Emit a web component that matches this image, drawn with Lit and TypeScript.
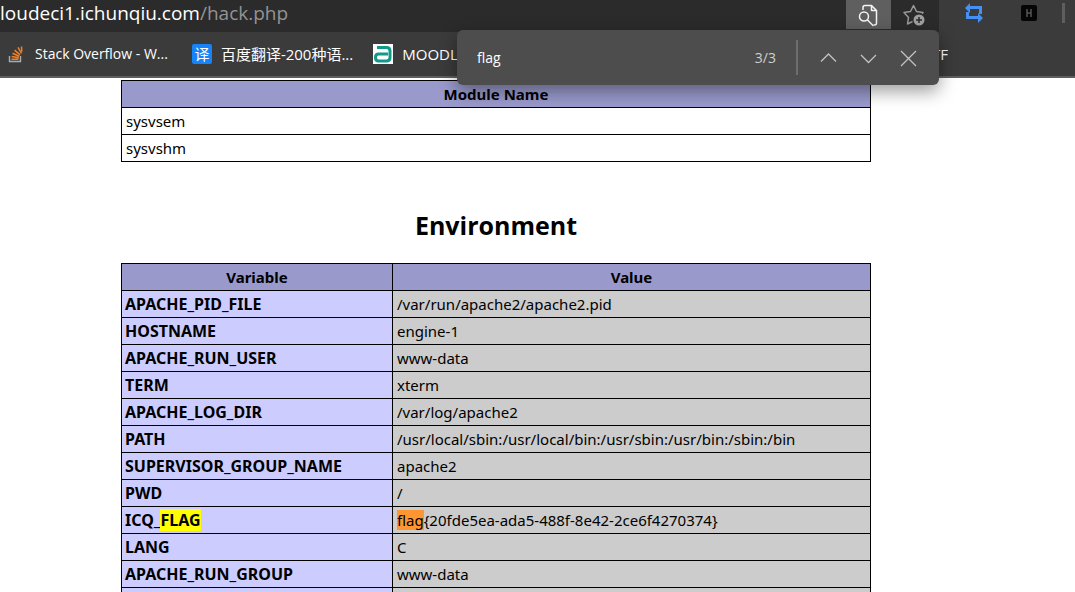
import { LitElement, html, css, svg, nothing } from "lit";
import { customElement } from "lit/decorators.js";

const fontStack = css`"Open Sans", "Noto Sans CJK SC", sans-serif`;

@customElement("browser-toolbar")
class BrowserToolbar extends LitElement {
  static styles = css`
    :host { display: block; color: #fff; font-family: ${fontStack}; }
    .top { display: flex; height: 32px; background: #3b3b3b; }
    .address { flex: 1; display: flex; background: #2b2b2b; min-width: 0; }
    .url { flex: 1; font-size: 19px; line-height: 26px; white-space: nowrap; overflow: hidden; }
    .path { color: #949494; }
    button { border: 0; padding: 0; margin: 0; background: none; display: block; }
    svg { display: block; }
    .find { width: 45px; height: 29px; padding: 0 10px; background: #5f5f5f; }
    .star { width: 48px; height: 29px; padding: 0 12px; }
    .extensions { width: 136px; display: flex; align-items: flex-start; padding-top: 3px; box-sizing: border-box; }
    .sync { margin-left: 25px; }
    .hack { margin-left: 37px; }
    .divider { width: 3px; height: 20px; margin-left: 25px; background: #5e5e5e; }
    .bookmarks {
      display: flex; align-items: center; height: 44px; padding-left: 6px;
      background: #3b3b3b; border-bottom: 2px solid #5e5e5e; overflow: hidden;
    }
    .bookmark {
      display: flex; align-items: center; gap: 9px; flex: none; margin-right: 20px;
      color: #fff; font-size: 15px; line-height: 20px; text-decoration: none; white-space: nowrap;
    }
    .latin { font-size: 14px; margin-right: 24px; }
    .spacer { flex: 1; }
    .last { margin-right: 127px; }
  `;
  render() {
    return html`
      <div class="top">
        <div class="address">
          <div class="url">loudeci1.ichunqiu.com<span class="path">/hack.php</span></div>
          <button class="find" aria-label="Find on page">
            <svg width="25" height="26" viewBox="0 0 25 26" fill="none" stroke="#f4f4f4" stroke-width="1.5" stroke-linejoin="round">
              <path d="M7 8V5.500q0-2 2-2h6.500l5 5v12.500q0 2-2 2h-1M15.500 3.500v5h5" />
              <circle cx="8" cy="14.500" r="4.500" /><path d="M11.500 18l5.500 5.500" stroke-linecap="round" />
            </svg>
          </button>
          <button class="star" aria-label="Add to favourites">
            <svg width="26" height="26" viewBox="0 0 26 26">
              <path d="M9.500 19.500l-5 2.500 1-6.500-4.500-5 6.500-1 3-6 3 6 6.500 1-1 1.200" fill="none" stroke="#989898" stroke-width="1.500" stroke-linejoin="round" />
              <circle cx="16" cy="18" r="5.500" fill="#a0a0a0" />
              <path d="M16 15v6M13 18h6" stroke="#2b2b2b" stroke-width="1.500" />
            </svg>
          </button>
        </div>
        <div class="extensions">
          <button class="sync" aria-label="Sync">
            <svg width="20" height="20" viewBox="0 0 20 20" fill="#4590f5">
              <path d="M6 0v3h12v8h-3V6H6v4L1 5zM14 20v-4H2V9h3v4h9V10l5 5z" />
            </svg>
          </button>
          <button class="hack" aria-label="HackBar">
            <svg width="16" height="20" viewBox="0 0 16 20">
              <rect y="2" width="16" height="16" rx="2" fill="#050505" />
              <path d="M6 6v8M10 6v8M6 10h4" stroke="#555" stroke-width="1.500" />
            </svg>
          </button>
          <span class="divider"></span>
        </div>
      </div>
      <nav class="bookmarks">
        <a class="bookmark latin" href="#">
          <svg width="20" height="20" viewBox="0 0 20 20" fill="none">
            <path d="M3.500 12v5.500h11V12" stroke="#a9adb0" stroke-width="1.400" />
            <path d="M5.500 15.200h7M5.700 12.500l7 1.200M6.600 9.300l6.500 3M8.600 6.200l5.500 4.600M12 3.300l3.500 6M15.500 2.500l.3 5" stroke="#f48024" stroke-width="1.500" />
          </svg>
          Stack Overflow - W...
        </a>
        <a class="bookmark" href="#">
          <svg width="20" height="20" viewBox="0 0 20 20">
            <rect width="20" height="20" rx="2" fill="#1684f8" />
            <text x="10" y="15.500" text-anchor="middle" font-size="15" fill="#fff" font-family="Noto Sans CJK SC">译</text>
          </svg>
          百度翻译-200种语...
        </a>
        <a class="bookmark" href="#">
          <svg width="20" height="20" viewBox="0 0 20 20">
            <rect width="20" height="20" fill="#fff" />
            <path d="M4 3.500h9.500q3.500 0 3.500 3.500v6.500q0 3.500-3.500 3.500H5.500q-3 0-3-3.500T5.500 10H15" fill="none" stroke="#11998a" stroke-width="3" />
            <path d="M6.500 13.500h6" stroke="#fff" stroke-width="1" />
          </svg>
          MOODLE
        </a>
        <span class="spacer"></span>
        <a class="bookmark last" href="#">CTF</a>
      </nav>
    `;
  }
}

@customElement("find-bar")
class FindBar extends LitElement {
  static styles = css`
    :host {
      display: flex; align-items: center; box-sizing: border-box; width: 482px; height: 55px;
      padding: 0 11px 0 20px; border-radius: 6px; background: #4d4d4d; color: #fff;
      box-shadow: 0 6px 18px rgba(0, 0, 0, 0.4); font-family: ${fontStack};
    }
    input {
      flex: 1; min-width: 0; padding: 0; border: 0; outline: 0; background: none;
      color: #fff; font: inherit; font-size: 14px; line-height: 20px;
    }
    .count { color: #cfcfcf; font-size: 14px; line-height: 20px; }
    .rule { width: 2px; height: 35px; margin: 0 10px 0 20px; background: #6e6e6e; }
    button { width: 40px; height: 40px; padding: 0; border: 0; background: none; }
    svg { display: block; margin: auto; }
  `;
  icon(d: string) {
    return html`<svg width="20" height="20" viewBox="0 0 20 20" fill="none" stroke="#c2c2c2" stroke-width="1.300">${svg`<path d=${d} />`}</svg>`;
  }
  render() {
    return html`
      <input type="text" aria-label="Find on page" value="flag" />
      <span class="count">3/3</span>
      <span class="rule"></span>
      <button aria-label="Previous">${this.icon("M3 13.5l7.500-7.500 7.500 7.500")}</button>
      <button aria-label="Next">${this.icon("M3 7l7.500 7.500L18 7")}</button>
      <button aria-label="Close">${this.icon("M3 3l15 15M18 3L3 18")}</button>
    `;
  }
}

const environment: [string, string][] = [
  ["APACHE_PID_FILE", "/var/run/apache2/apache2.pid"],
  ["HOSTNAME", "engine-1"],
  ["APACHE_RUN_USER", "www-data"],
  ["TERM", "xterm"],
  ["APACHE_LOG_DIR", "/var/log/apache2"],
  ["PATH", "/usr/local/sbin:/usr/local/bin:/usr/sbin:/usr/bin:/sbin:/bin"],
  ["SUPERVISOR_GROUP_NAME", "apache2"],
  ["PWD", "/"],
  ["ICQ_FLAG", "flag{20fde5ea-ada5-488f-8e42-2ce6f4270374}"],
  ["LANG", "C"],
  ["APACHE_RUN_GROUP", "www-data"],
  ["", ""],
];

@customElement("app-root")
class AppRoot extends LitElement {
  static styles = css`
    :host {
      display: block; position: relative; height: 100vh; overflow: hidden;
      background: #fff; color: #000; font-family: ${fontStack};
    }
    find-bar { position: absolute; top: 30px; right: 136px; }
    main { padding: 2px 83px 0 0; }
    table {
      width: 750px; max-width: 100%; margin: 0 auto; border-collapse: collapse;
      table-layout: fixed; font-family: "Noto Sans", sans-serif; font-size: 15px; line-height: 20px;
    }
    th, td { box-sizing: border-box; height: 27px; padding: 3px 4px; border: 1px solid #000; text-align: left; }
    thead th { background: #9999cc; text-align: center; font-weight: 700; }
    tbody th { padding: 3px; background: #ccccff; font-size: 16px; font-weight: 700; }
    .variable { width: 271px; }
    .value { background: #cccccc; }
    h2 { margin: 45px 0 20px; text-align: center; font-size: 25px; line-height: 36px; font-weight: 700; }
    mark { color: #000; background: #ffff00; }
    .current { background: #ff9632; }
  `;
  highlight(text: string) {
    const at = text.toLowerCase().indexOf("flag");
    if (at < 0) return text;
    const hit = text.slice(at, at + 4);
    return html`${at ? text.slice(0, at) : nothing}<mark class=${at ? "match" : "current"}>${hit}</mark>${text.slice(at + 4)}`;
  }
  render() {
    return html`
      <browser-toolbar></browser-toolbar>
      <find-bar></find-bar>
      <main>
        <table>
          <thead><tr><th>Module Name</th></tr></thead>
          <tbody><tr><td>sysvsem</td></tr><tr><td>sysvshm</td></tr></tbody>
        </table>
        <h2>Environment</h2>
        <table>
          <thead><tr><th class="variable">Variable</th><th>Value</th></tr></thead>
          <tbody>
            ${environment.map(([k, v]) => html`<tr><th>${this.highlight(k)}</th><td class="value">${this.highlight(v)}</td></tr>`)}
          </tbody>
        </table>
      </main>
    `;
  }
}
